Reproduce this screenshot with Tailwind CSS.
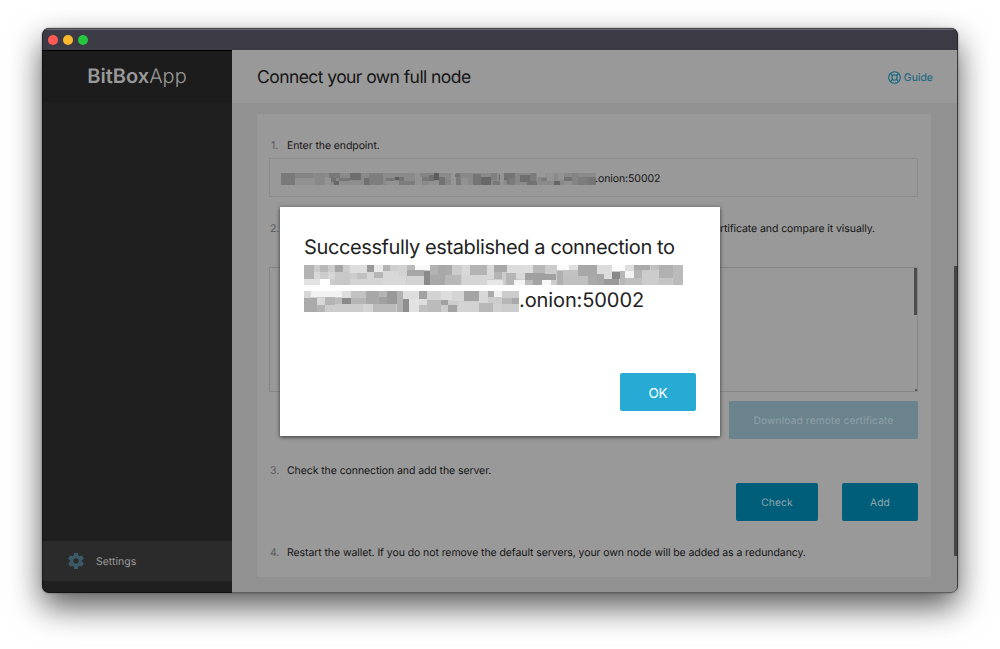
<!DOCTYPE html>
<html lang="en">
<head>
<meta charset="utf-8">
<title>BitBoxApp</title>
<script src="https://cdn.jsdelivr.net/npm/@tailwindcss/browser@4"></script>
</head>
<body class="bg-white w-[1000px] h-[649px] overflow-hidden font-['Inter',sans-serif] pt-[28px] pl-[42px] [text-rendering:geometricPrecision]">
<div class="relative w-[916px] h-[565px] rounded-[7px] shadow-[0_14px_32px_rgba(0,0,0,0.65),0_0_2px_rgba(0,0,0,0.4)]">
  <div class="flex flex-col w-full h-full rounded-[7px] overflow-hidden bg-[#919191]">
    <div class="flex items-center gap-[5px] h-[22px] shrink-0 bg-[#3b3a45] border-t-2 border-[#696970] pl-[6px]">
      <i class="size-[10px] rounded-full bg-[#ff5b54]"></i>
      <i class="size-[10px] rounded-full bg-[#fdb92c]"></i>
      <i class="size-[10px] rounded-full bg-[#28c63f]"></i>
    </div>
    <div class="flex flex-1 min-h-0">
      <aside class="flex flex-col w-[190px] bg-[#1f1f1f] border-t border-t-black">
        <div class="h-[51px] bg-[#1c1c1c] flex items-center justify-center text-[#999] text-[20px] leading-none pb-[2px]"><span class="whitespace-nowrap"><b class="font-semibold">BitBox</b><span class="font-light">App</span></span></div>
        <div class="flex-1"></div>
        <div class="h-[40px] mb-[12px] bg-[#2b2b2b] flex items-center pl-[26px] gap-[12px]">
          <svg class="size-[16px]" viewBox="2 2 20 20" fill="#3b5966"><path d="M19.43 12.98c.04-.32.07-.64.07-.98s-.03-.66-.07-.98l2.11-1.65c.19-.15.24-.42.12-.64l-2-3.46c-.12-.22-.39-.3-.61-.22l-2.49 1c-.52-.4-1.08-.73-1.69-.98l-.38-2.65C14.46 2.18 14.25 2 14 2h-4c-.25 0-.46.18-.49.42l-.38 2.65c-.61.25-1.17.59-1.69.98l-2.49-1c-.23-.09-.49 0-.61.22l-2 3.46c-.13.22-.07.49.12.64l2.11 1.65c-.04.32-.07.65-.07.98s.03.66.07.98l-2.11 1.65c-.19.15-.24.42-.12.64l2 3.46c.12.22.39.3.61.22l2.49-1c.52.4 1.08.73 1.69.98l.38 2.65c.03.24.24.42.49.42h4c.25 0 .46-.18.49-.42l.38-2.65c.61-.25 1.17-.59 1.69-.98l2.49 1c.23.09.49 0 .61-.22l2-3.46c.12-.22.07-.49-.12-.64l-2.11-1.65zM12 15.5c-1.93 0-3.5-1.57-3.5-3.5s1.57-3.5 3.5-3.5 3.5 1.57 3.5 3.5-1.57 3.5-3.5 3.5z"/></svg>
          <span class="text-[10.5px] text-[#999] pt-[2px]">Settings</span>
        </div>
      </aside>
      <main class="relative flex-1 min-w-0 flex flex-col border-r border-[#5a5a5a]">
        <header class="h-[53px] bg-[#999] flex items-center justify-between pl-[25px] pr-[24px] pt-[2px]">
          <h1 class="text-[17.5px] tracking-[-0.57px] text-[#151515] whitespace-nowrap pt-[2px]">Connect your own full node</h1>
          <div class="flex items-center gap-[3px] text-[#0d6380] text-[10.5px]">
            <svg class="size-[13px]" viewBox="0 0 24 24" fill="none" stroke="#0d6380" stroke-width="2"><circle cx="12" cy="12" r="10.7"/><rect x="7.5" y="7.5" width="9" height="9" rx="2.5"/><path d="M4.5 4.5l4 4M19.500 4.500l-4 4M4.500 19.500l4-4M19.500 19.500l-4-4"/></svg>
            <span>Guide</span>
          </div>
        </header>
        <section class="mt-[11px] ml-[25px] w-[674px] h-[463px] bg-[#999] rounded-[2px] pl-[12px] pr-[13px] pt-[22px] text-[10.5px] tracking-[-0.08px] text-[#151515]">
          <div class="flex h-[18px] items-center pt-[2px]"><span class="w-[18px] pl-[2px] text-[#5a5a5a]">1.</span><span>Enter the endpoint.</span></div>
          <div class="mt-[4px] h-[39px] border border-[#8b8b8b] flex items-center pl-[11px] pt-[2px]">
            <svg class="w-[315px] h-[12px]" viewBox="63 39 945 36" preserveAspectRatio="none" shape-rendering="crispEdges" data-mosaic="small"></svg><span class="-ml-px">.onion:50002</span>
          </div>
          <div class="mt-[22px] flex h-[18px] items-center pt-[2px] pr-[43px]"><span class="w-[18px] pl-[1px] text-[#5a5a5a]">2.</span><span class="ml-auto">certificate and compare it visually.</span></div>
          <div class="mt-[30px] h-[125px] border border-[#868686] flex flex-col items-end justify-between">
            <i class="w-[3px] h-[47px] bg-[#4c4c4c]"></i>
            <i class="size-[2px] bg-[#5c5c5c]"></i>
          </div>
          <div class="mt-[9px] flex justify-end"><span class="w-[189px] h-[38px] rounded-[2px] bg-[#6a838d] text-[#8fa0a7] flex items-center justify-center pt-[3px] text-[10.25px] tracking-[0.1px]">Download remote certificate</span></div>
          <div class="mt-[22px] flex h-[18px] items-center pt-[2px]"><span class="w-[18px] pl-[1px] text-[#5a5a5a]">3.</span><span>Check the connection and add the server.</span></div>
          <div class="mt-[4px] flex justify-end gap-[24px] text-[#8fa5ad] text-[10.25px] tracking-[0.1px]">
            <span class="w-[82px] h-[38px] rounded-[2px] bg-[#005e7a] flex items-center justify-center pt-[3px]">Check</span>
            <span class="w-[76px] h-[38px] rounded-[2px] bg-[#005e7a] flex items-center justify-center pt-[3px]">Add</span>
          </div>
          <div class="mt-[22px] flex h-[18px] items-center pt-[2px]"><span class="w-[18px] pl-[1px] text-[#5a5a5a]">4.</span><span class="whitespace-nowrap">Restart the wallet. If you do not remove the default servers, your own node will be added as a redundancy.</span></div>
        </section>
        <i class="absolute -right-px top-[216px] w-[4px] h-[290px] bg-[#464646]"></i>
      </main>
    </div>
  </div>
  <div class="absolute inset-0 rounded-[7px] border border-black/35 pointer-events-none"></div>
  <div class="absolute left-[238px] top-[179px] w-[440.4px] h-[229px] bg-white shadow-[0_1px_4px_rgba(0,0,0,0.65)] px-[24px] flex flex-col text-[20px] text-[#222]">
    <div class="mt-[27px] h-[26px] leading-[26px] whitespace-nowrap tracking-[-0.39px]">Successfully established a connection to</div>
    <svg class="mt-[5px] w-[379px] h-[20px] shrink-0" viewBox="42 120 1137 60" shape-rendering="crispEdges" data-mosaic="first"></svg>
    <div class="mt-[3px] h-[26px] flex items-center">
      <svg class="w-[215px] h-[21px] mt-px" viewBox="42 198 645 63" shape-rendering="crispEdges" data-mosaic="second"></svg><span class="leading-[26px] tracking-[-0.1px] pb-[2px]">.onion:50002</span>
    </div>
    <button class="mt-[59px] w-[76px] h-[38px] rounded-[2px] bg-[#27aad3] text-white text-[13.5px] self-end tracking-[-0.3px] pr-px pt-[2px]">OK</button>
  </div>
</div>
<script>
const mosaics = {
  first: "42,120,1137,61,cc;42,120,30,42,b3;72,142,18,20,d8;42,162,48,19,e3;90,120,24,20,b8;90,162,30,19,ff;114,140,24,22,d6;136,120,24,22,a6;136,142,44,39,c8;180,120,52,24,dd;202,144,30,18,c0;180,162,52,19,d4;232,120,20,20,99;252,120,27,20,e9;232,142,47,39,d4;252,142,27,18,b5;279,120,20,18,b4;299,120,28,18,cf;279,138,70,43,d8;327,120,24,34,d2;351,120,24,16,bb;375,120,45,16,f8;351,136,52,18,a6;351,154,50,27,d3;402,137,18,44,8a;420,120,25,30,b2;445,120,20,30,a8;420,150,46,31,a8;465,120,20,30,aa;466,150,48,31,b8;485,120,30,30,cc;515,120,25,30,d8;540,120,50,30,b4;515,150,75,31,d5;590,120,22,42,d8;612,120,38,20,a8;650,120,55,25,dc;612,140,24,22,b4;590,165,48,16,e6;648,145,30,36,b5;678,145,27,18,d8;672,165,32,16,f5;705,120,25,25,dd;730,120,35,26,b8;705,145,60,20,a0;705,165,25,16,bb;756,165,26,16,f8;730,165,27,16,a4;765,146,33,18,a0;800,120,36,16,fa;800,137,18,44,b0;836,120,28,16,e0;818,136,46,17,c2;818,153,75,28,c0;865,120,57,33,a8;893,153,30,28,aa;922,120,43,26,dc;922,147,20,34,a6;942,162,46,19,99;965,120,40,18,fa;942,141,24,21,dd;965,141,24,22,88;989,138,16,43,b6;1005,138,26,22,f2;1005,120,26,18,dd;1031,120,50,16,aa;1031,136,24,24,b4;1005,160,50,21,bf;1083,120,24,16,c0;1107,120,42,38,b0;1107,158,40,23,c4;1149,120,30,61,bb",
  second: "42,198,645,63,cc;42,198,22,20,d6;64,198,92,18,f2;42,218,38,43,aa;80,218,24,22,d8;104,216,30,24,b4;80,240,24,21,b4;156,198,27,20,dd;134,218,22,18,bb;156,218,27,18,8a;183,198,45,20,c2;183,218,45,20,b4;228,198,38,38,a8;266,198,24,18,b4;266,216,24,22,a0;290,198,30,38,99;218,238,30,23,d4;248,236,70,25,bb;320,198,20,63,b2;340,198,46,24,dd;340,222,18,39,8e;358,222,28,39,e3;386,198,25,24,a2;386,222,25,18,dd;386,240,25,21,bf;411,198,42,26,d3;411,224,42,37,bb;453,198,32,26,dd;453,224,20,16,a0;474,240,28,21,a3;485,198,37,30,d5;522,198,46,30,a4;503,230,65,31,d3;568,198,26,37,d8;594,198,18,18,aa;612,198,24,18,f0;594,216,42,20,cc;568,235,40,26,b8;636,218,30,18,b6;666,218,21,18,a8;608,236,28,25,d0",
  small: "63,39,945,36,8a;64,40,40,34,7a;104,40,54,14,84;104,54,60,20,91;168,40,28,34,88;196,50,18,24,94;206,40,34,14,78;214,54,14,12,70;222,64,14,10,68;236,54,34,10,76;236,64,76,10,8e;270,40,34,20,6e;312,54,14,20,70;326,40,42,34,7e;368,42,22,14,8c;378,54,26,10,78;404,50,12,10,5c;416,52,16,10,74;378,64,38,10,92;416,64,50,10,7c;432,40,28,12,8a;466,40,20,34,94;486,50,20,12,78;480,40,40,10,84;506,44,16,18,70;522,40,14,20,5c;536,50,18,24,72;506,64,30,10,90;554,60,20,14,86;574,40,14,34,96;588,40,14,34,7c;602,40,22,34,92;587,54,13,20,78;586,42,14,10,72;600,40,40,14,88;640,42,22,32,74;662,52,30,22,68;692,40,18,20,80;700,64,30,10,78;716,44,24,16,6c;740,40,30,20,84;740,54,24,18,72;719,40,14,34,94;733,40,32,14,74;747,54,20,20,7c;765,40,16,34,88;781,46,30,20,6e;811,40,16,22,7c;800,64,30,10,72;830,40,28,12,98;842,54,18,10,7c;860,40,22,22,94;883,64,16,10,66;895,40,16,20,94;911,52,24,12,72;911,64,28,10,90;935,40,20,34,84;955,50,28,24,7c;975,40,33,12,8a;983,52,25,22,76"
};
for (const svg of document.querySelectorAll("[data-mosaic]")) {
  for (const cell of mosaics[svg.dataset.mosaic].split(";")) {
    const [x, y, width, height, g] = cell.split(",");
    const r = document.createElementNS("http://www.w3.org/2000/svg", "rect");
    Object.entries({ x, y, width, height, fill: "#" + g + g + g }).forEach(([k, v]) => r.setAttribute(k, v));
    svg.append(r);
  }
}
</script>
</body>
</html>
